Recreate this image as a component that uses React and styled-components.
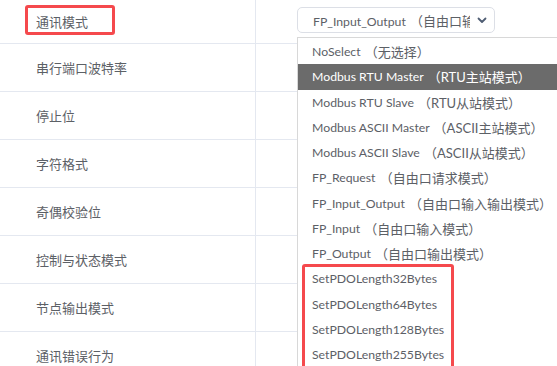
import React from "react";
import styled, { createGlobalStyle } from "styled-components";

const Global = createGlobalStyle`
  html, body { margin: 0; padding: 0; background: #fff; }
  body { font-family: Lato, "Noto Sans CJK SC", sans-serif; overflow: hidden; }
  * { box-sizing: border-box; }
`;

const Page = styled.div`
  position: relative;
  width: 557px;
  height: 366px;
  overflow: hidden;
`;

const Table = styled.div`
  display: grid;
  grid-template-columns: 256px 1fr;
`;

const Row = styled.div`
  display: contents;
`;

const LabelCell = styled.div`
  height: ${(p) => (p.$first ? 44 : 48)}px;
  border-bottom: 1px solid #e4e8f0;
  border-right: 1px solid #e4e8f0;
  display: flex;
  align-items: center;
  padding-left: 36px;
  font-size: 13px;
  color: #5c6066;
`;

const ValueCell = styled.div`
  height: ${(p) => (p.$first ? 44 : 48)}px;
  border-bottom: 1px solid #e4e8f0;
  display: flex;
  align-items: center;
  padding-left: 41px;
`;

const SelectBox = styled.div`
  width: 198px;
  height: 26px;
  border: 1px solid #dcdfe6;
  border-radius: 5px;
  display: flex;
  align-items: center;
  padding: 0 6px 0 15px;
  font-size: 12.25px;
  color: #5c6066;
  margin-top: -3px;
`;

const SelectText = styled.span`
  flex: 1;
  white-space: nowrap;
  overflow: hidden;
`;

const Note = styled.span`
  font-size: 13px;
  margin-left: 1px;
`;

const Chevron = styled.svg`
  width: 12px;
  height: 12px;
  margin-left: 6px;
  flex: none;
`;

const Dropdown = styled.ul`
  position: absolute;
  left: 297px;
  top: 37px;
  width: 290px;
  margin: 0;
  padding: 1px 0 0;
  list-style: none;
  background: #fff;
  border: 1px solid #d8d8d8;
`;

const Option = styled.li`
  height: 25.25px;
  display: flex;
  align-items: center;
  padding-left: 14px;
  font-size: 12.25px;
  white-space: pre;
  color: ${(p) => (p.$active ? "#ffffff" : "#5c6066")};
  background: ${(p) => (p.$active ? "#6b6b6b" : "transparent")};
`;

const LabelMark = styled.div`
  position: absolute;
  left: 25px;
  top: 5px;
  width: 90px;
  height: 30px;
  border: 3px solid #f5494d;
  border-radius: 3px;
  pointer-events: none;
`;

const OptionsMark = styled(LabelMark)`
  left: 302px;
  top: 264px;
  width: 152px;
  height: 120px;
`;

const labels = [
  "通讯模式",
  "串行端口波特率",
  "停止位",
  "字符格式",
  "奇偶校验位",
  "控制与状态模式",
  "节点输出模式",
  "通讯错误行为",
];

const options = [
  ["NoSelect", "（无选择）"],
  ["Modbus RTU Master", "（RTU主站模式）"],
  ["Modbus RTU Slave", "（RTU从站模式）"],
  ["Modbus ASCII Master", "（ASCII主站模式）"],
  ["Modbus ASCII Slave", "（ASCII从站模式）"],
  ["FP_Request", "（自由口请求模式）"],
  ["FP_Input_Output", "（自由口输入输出模式）"],
  ["FP_Input", "（自由口输入模式）"],
  ["FP_Output", "（自由口输出模式）"],
  ["SetPDOLength32Bytes"],
  ["SetPDOLength64Bytes"],
  ["SetPDOLength128Bytes"],
  ["SetPDOLength255Bytes"],
];

export default function App() {
  return (
    <>
      <Global />
      <Page>
        <Table>
          {labels.map((l, i) => (
            <Row key={l}>
              <LabelCell $first={i === 0}>{l}</LabelCell>
              <ValueCell $first={i === 0}>
                {i === 0 && (
                  <SelectBox>
                    <SelectText>
                      FP_Input_Output <Note>（自由口输入输出模式）</Note>
                    </SelectText>
                    <Chevron viewBox="0 0 12 12">
                      <path d="M2.5 4.5 L6 8 L9.5 4.5" fill="none" stroke="#4f5d73" strokeWidth="1.8" strokeLinecap="round" strokeLinejoin="round" />
                    </Chevron>
                  </SelectBox>
                )}
              </ValueCell>
            </Row>
          ))}
        </Table>
        <Dropdown>
          {options.map(([name, note], i) => (
            <Option key={name} $active={i === 1}>
              {name}
              {note && <> <Note>{note}</Note></>}
            </Option>
          ))}
        </Dropdown>
        <LabelMark />
        <OptionsMark />
      </Page>
    </>
  );
}
